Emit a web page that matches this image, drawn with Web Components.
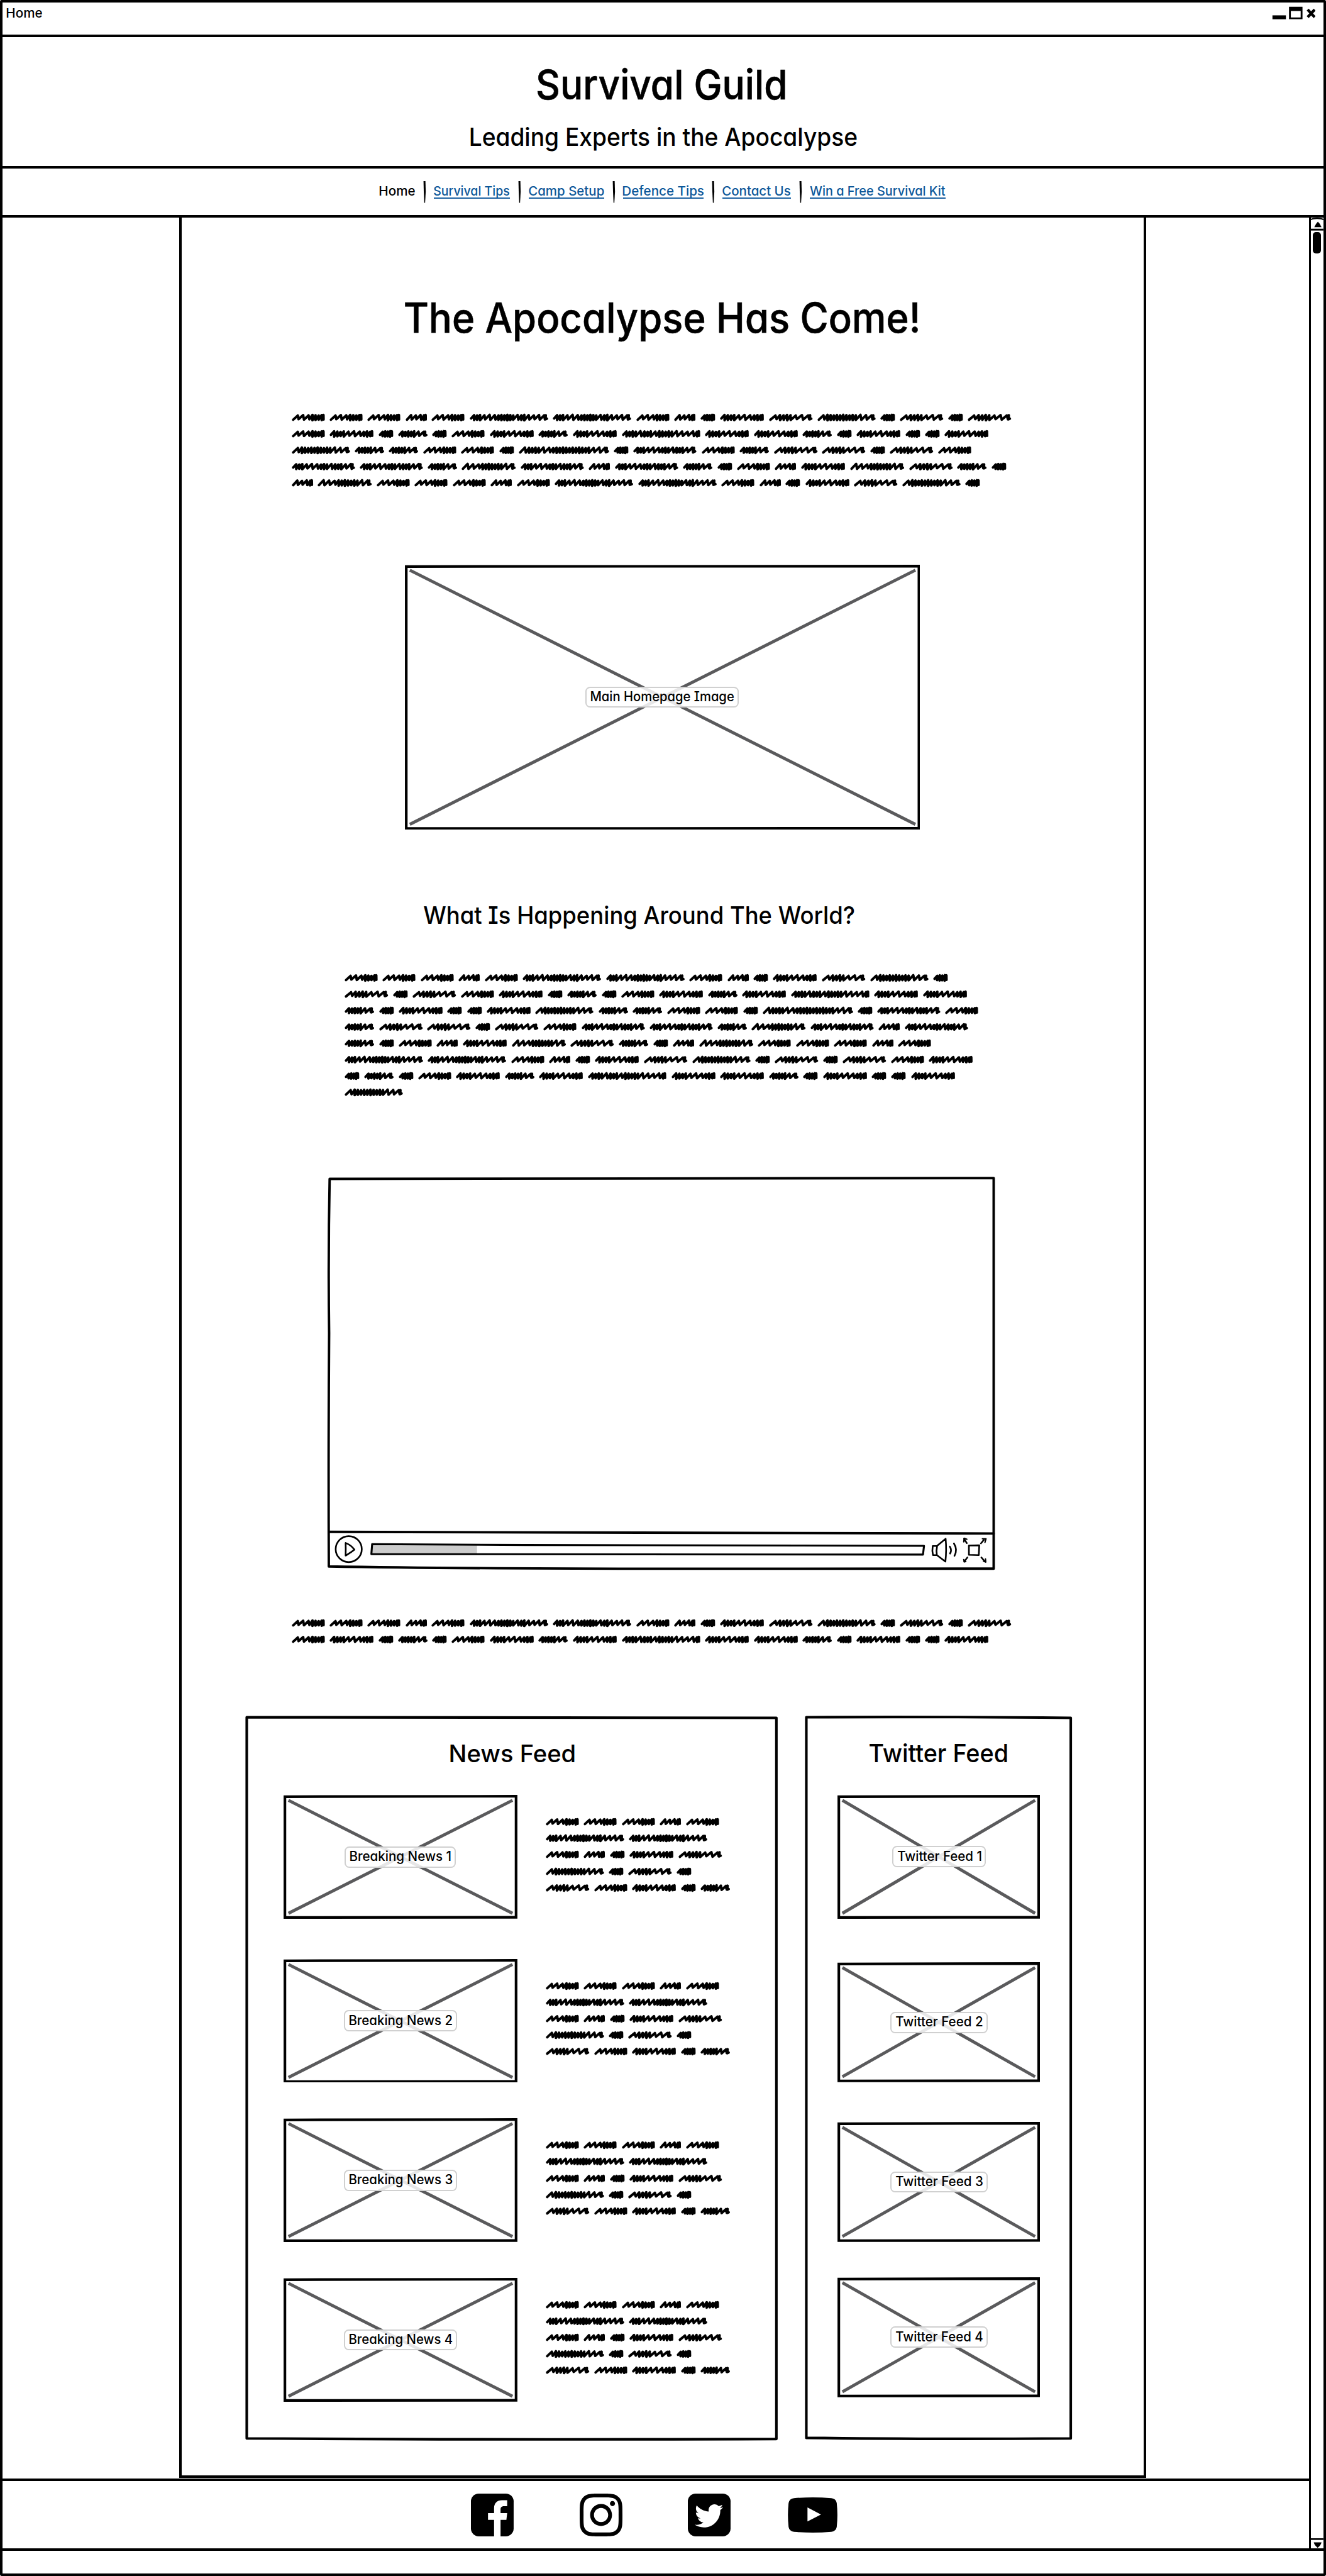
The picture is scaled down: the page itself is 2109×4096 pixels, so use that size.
<!DOCTYPE html>
<html lang="en">
<head>
<meta charset="utf-8">
<title>Home</title>
<style>
html,body{margin:0;background:#fff}
body{width:2109px;height:4096px;overflow:hidden;font-family:Inter,"Liberation Sans",sans-serif;font-weight:500;color:#000}
</style>
</head>
<body>
<guild-page></guild-page>
<script>
const define = (name, render, after) => customElements.define(name, class extends HTMLElement {
  connectedCallback() {
    if (this.shadowRoot) return;
    this.attachShadow({mode: 'open'}).innerHTML = render(this);
    if (after) after(this);
  }
});
const num = (el, n, d) => parseFloat(el.getAttribute(n) ?? d);

/* One line of lettering, given by its cap height and ink width. */
define('sk-text', el => {
  const w = num(el, 'w'), c = num(el, 'cap', 18.3);
  return `<style>
    :host{display:block;flex:none;width:${w}px;height:${c}px;line-height:${c}px;font-size:${c / .727}px;-webkit-text-stroke:${c > 50 ? .7 : 0}px currentColor}
    span{display:inline-block;white-space:nowrap;transform-origin:0 50%;font-feature-settings:"cv11","cv08"}
  </style><span><slot></slot></span>`;
}, el => {
  const w = num(el, 'w'), c = num(el, 'cap', 18.3), s = el.shadowRoot.querySelector('span');
  const adv = s.getBoundingClientRect().width / el.getBoundingClientRect().width * w;
  const ctx = document.createElement('canvas').getContext('2d');
  ctx.font = `500 ${c / .727}px Inter`;
  const m = ctx.measureText(el.textContent.trim());
  const lb = -m.actualBoundingBoxLeft, rb = m.width - m.actualBoundingBoxRight;
  const k = w / (adv - lb - rb);
  s.style.transform = `translateX(${-lb * k}px) scaleX(${k})`;
});

/* Scribbled placeholder words: o = open stroke, d = dense stroke. */
const WORDS = {
  a: [64.5, 'ooodddd'], b: [42, 'oood'], c: [152, 'dddoooddddddoddoooo'], d: [29, 'dddd'],
  e: [85.5, 'ddddoooddd'], f: [84.5, 'oddddooo'], g: [113, 'oddddddddddooo'], h: [57.5, 'dddddoo'],
  i: [122.5, 'dddooodddodddoo'], j: [105, 'ooodddddddoo'], k: [152, 'ddddodddodddddooood'], l: [175, 'oddddooddddddddddddooo']
};
const STREAM = 'aaabaccabdefgdfdfaedhdaehekeehdeddeghhaadldiahffdfaiihjibihdabejfhdbj';
const word = key => {
  const [w, pat] = WORDS[key], unit = {o: 1.75, d: 1};
  const total = [...pat].reduce((t, p) => t + unit[p], 0), k = (w - 9.5) / total;
  let x = 2.8, d = `M${x} ${pat[0] === 'o' ? 11.4 : 9}`;
  [...pat].forEach((p, i) => {
    const s = unit[p] * k, j = ((i * 7 + w) % 5) * .28;
    const hx = x + s * .62 + 2.4, nx = x + s, ly = (p === 'd' ? 12.6 : 11.6) - j;
    d += ` L${hx.toFixed(1)} ${(2 + j).toFixed(1)} L${nx.toFixed(1)} ${ly.toFixed(1)}`;
    x = nx;
  });
  d += pat.endsWith('d') ? ` L${w - 3.2} 2.2 L${w - 3} 11` : ` L${w - 5} 2.8 L${w - 5.5} 10.6 L${w - 2.8} 9.4`;
  return `<svg width="${w}" height="14.5" viewBox="0 0 ${w} 14.5"><path d="${d}"/></svg>`;
};
define('sk-scribble', el => {
  let out = '';
  for (let i = 0; i < num(el, 'count'); i++) out += word(STREAM[i % STREAM.length]);
  return `<style>
    :host{display:flex;flex:none;flex-wrap:wrap;align-content:flex-start;column-gap:8.8px;row-gap:17.2px}
    svg{display:block;flex:none;overflow:visible}
    path{fill:none;stroke:#000;stroke-width:4.8;stroke-linecap:round;stroke-linejoin:round}
  </style>${out}`;
});

/* Hand-ruled panel. */
define('sk-panel', el => {
  const w = num(el, 'w'), h = num(el, 'h');
  return `<style>
    :host{display:grid;flex:none;width:${w}px;height:${h}px}
    svg,div{grid-area:1/1}
    svg{display:block;overflow:visible}
    path{fill:none;stroke:#000;stroke-width:5;stroke-linejoin:round}
    div{display:flex;flex-direction:column;align-items:flex-start}
  </style>
  <svg width="${w}" height="${h}"><path d="M3 3 Q${w * .45} 1.6 ${w - 3} 4.2 Q${w - 1} ${h * .45} ${w - 3} ${h - 3} Q${w * .45} ${h - 1} 3 ${h - 4} Q1.4 ${h * .3} 3 3Z"/></svg>
  <div><slot></slot></div>`;
});

/* Crossed picture placeholder with a caption chip. */
define('sk-image', el => {
  const w = num(el, 'w'), h = num(el, 'h'), t = num(el, 'chip');
  return `<style>
    :host{display:grid;flex:none;width:${w}px;height:${h}px;place-items:center}
    svg,div{grid-area:1/1}
    svg{display:block}
    div{box-sizing:border-box;width:${t}px;height:41px;padding:8px 0 0 8.5px;border:2.5px solid #d0d0d0;border-radius:9px;background:rgba(255,255,255,.85)}
  </style>
  <svg width="${w}" height="${h}" fill="none">
    <path d="M2.6 3.4 L${w - 2.6} 2.6 V${h - 2.8} L2.6 ${h - 2.4}Z" stroke="#000" stroke-width="5.1"/>
    <path d="M9.5 10.5 L${w - 9.5} ${h - 10.5} M9.5 ${h - 10.5} L${w - 9.5} 10.5" stroke="#5a5a5c" stroke-width="6"/>
  </svg>
  <div><sk-text w="${t - 20.5}" cap="18.6">${el.getAttribute('caption')}</sk-text></div>`;
});

define('sk-player', () => `<style>
    :host{display:grid;width:1289px;height:758px}
    .frame,.ui{grid-area:1/1}
    svg{display:block;overflow:visible;fill:none;stroke:#000;stroke-linejoin:round;stroke-linecap:round}
    .ui{display:flex;flex-direction:column;justify-content:flex-end}
    .bar{display:flex;align-items:flex-start;height:67px;padding-left:14px}
  </style>
  <svg class="frame" width="1289" height="758" stroke-width="4.700">
    <path d="M4 3 Q600 .5 1286 1.400 Q1285.500 370 1286 755.300 L700 755.500 Q250 755.500 2.400 751 Q1.400 520 3 300 Q1 150 4 3Z"/>
    <path d="M3 684.300 Q500 685.500 1286 687.500"/>
  </svg>
  <div class="ui"><div class="bar">
    <svg width="54" height="54" stroke-width="3.200"><ellipse cx="27.500" cy="27" rx="25.200" ry="25"/><path d="M21.500 15 Q22 27 21.500 39.500 Q34 32 38.500 28 Q32 19 21.500 15Z"/></svg>
    <svg width="1072" height="54" style="margin-left:14.500px" stroke-width="3.800">
      <path d="M3 17 L206 19.500 V37 L2 36.500Z" fill="#ccc" stroke="none"/>
      <path d="M3.500 17.300 Q150 18.800 300 19 L1069 20.600 L1067 37.500 Q500 36.500 2 36.500Z"/></svg>
    <svg width="52" height="54" style="margin-left:11.500px" stroke-width="3.200"><path d="M3 21 H11 L28 7 Q30 30 27.500 51 L11 38.500 H3.500 Q1.500 30 3 21Z M11.500 21 Q9.500 30 11 38.500 M36 22 Q40.500 29 36.500 35.500 M44 16 Q51.500 28 45 40"/></svg>
    <svg width="46" height="54" style="margin-left:9px" stroke-width="3.200"><path d="M11 20 L31 19.500 L30 38.500 L11 38Z"/>
      <path d="M7 15.500 L1.500 7 M40 9 L34 16 M8 43 L2 51 M35 43 L42 51" stroke-width="3"/>
      <path d="M1 13 L2 6 L7 8 M37 7 L44 7 L42 14 M1 47 L2 51.500 L5 51 M43 46 L43.500 52 L39 50" stroke-width="2.600"/></svg>
  </div></div>`);

define('sk-nav', () => {
  const items = [['Home', 68], ['Survival Tips', 146], ['Camp Setup', 145.5], ['Defence Tips', 156], ['Contact Us', 131.5], ['Win a Free Survival Kit', 262]];
  const sep = '<svg width="36.6" height="42"><path d="M16.500 0 H20.200 L20.800 20 L19.600 42 H18 L17 20Z"/></svg>';
  return `<style>
    :host{display:flex;box-sizing:border-box;height:95px;border-bottom:4.900px solid #000;padding:24.500px 0 0 728.5px;align-items:flex-start}
    svg{display:block;flex:none}
    span{display:block;margin-top:9.600px}
    .link{color:#0c5799;padding-bottom:3.600px;border-bottom:2.500px solid #1d62a2}
  </style>` + items.map(([t, w], i) => `${i ? sep : ''}<span class="${i ? 'link' : ''}"><sk-text w="${w}" cap="18.3">${t}</sk-text></span>`).join('');
});

define('sk-titlebar', () => `<style>
    :host{display:flex;box-sizing:border-box;height:66.500px;border-bottom:5.500px solid #000;padding:10.400px 16px 0 8px;justify-content:space-between;align-items:flex-start}
    svg{display:block;margin-top:-3px}
  </style>
  <sk-text w="68" cap="18.3">Home</sk-text>
  <svg width="84" height="26"><path d="M1 17.500 H27 V25 H1Z"/><path fill-rule="evenodd" d="M33 1 H59 V25 H33Z M36.500 9 V21.500 H55.500 V9Z"/><path d="M69 6.500 L82.500 21 M82.500 6.500 L69 21" stroke="#000" stroke-width="5.400"/></svg>`);

define('sk-scrollbar', () => `<style>
    :host{display:flex;flex-direction:column;box-sizing:border-box;width:28px;border-left:3.700px solid #000}
    svg{display:block;flex:none;overflow:visible}
    .track{flex:1}
    .thumb{width:16px;height:42px;margin:2px 0 0 4px;border-radius:6px;background:#000}
  </style>
  <svg width="24" height="25"><path d="M0 4 Q3 1.500 12 1.500 T24 4" fill="none" stroke="#000" stroke-width="2.600"/><path d="M6.500 18.500 Q10 11 13.500 8 Q18 12 20.500 18.500Z"/><path d="M0 21.500 H24 V25 H0Z"/></svg>
  <div class="track"><div class="thumb"></div></div>
  <svg width="24" height="19"><path d="M0 0 H24 V3.200 H0Z"/><path d="M5.500 8 H20.500 Q19 14 13 18.500 Q7 14 5.500 8Z"/></svg>`);

define('sk-social', () => `<style>
    :host{display:flex;align-items:center;box-sizing:border-box;height:135px;padding:1px 0 0 904px;border-top:5px solid #000}
    svg{display:block;flex:none}
  </style>
  <svg width="82.500" height="82.500" viewBox="0 0 82.500 82.500"><rect width="82.500" height="82.500" rx="15"/><path fill="#fff" d="M44.700 82.500V50.700H33V37.700H44.700V28C44.700 18 51 12.700 60 12.700H70V24.300H64C58.500 24.300 57.200 27 57.200 31V37.700H70L68.500 50.700H57.200V82.500Z"/></svg>
  <svg style="margin-left:128.300px" width="82.500" height="82.500" viewBox="0 32 448 448"><path d="M224.100 141c-63.600 0-114.900 51.300-114.900 114.900s51.300 114.900 114.900 114.900S339 319.500 339 255.900 287.700 141 224.100 141zm0 189.600c-41.100 0-74.700-33.500-74.700-74.700s33.500-74.700 74.700-74.700 74.700 33.500 74.700 74.700-33.600 74.700-74.700 74.700zm146.400-194.300c0 14.900-12 26.800-26.800 26.800-14.900 0-26.800-12-26.800-26.800s12-26.800 26.800-26.800 26.800 12 26.800 26.800zm76.100 27.200c-1.700-35.900-9.900-67.700-36.200-93.900-26.200-26.200-58-34.400-93.900-36.200-37-2.100-147.900-2.100-184.900 0-35.800 1.700-67.600 9.900-93.900 36.100s-34.400 58-36.200 93.900c-2.100 37-2.100 147.900 0 184.900 1.700 35.900 9.900 67.700 36.200 93.900s58 34.400 93.900 36.200c37 2.100 147.900 2.100 184.900 0 35.900-1.700 67.700-9.900 93.900-36.200 26.200-26.200 34.400-58 36.200-93.900 2.100-37 2.100-147.800 0-184.800zM398.800 388c-7.800 19.600-22.900 34.700-42.600 42.600-29.500 11.700-99.500 9-132.100 9s-102.700 2.600-132.100-9c-19.600-7.800-34.700-22.900-42.600-42.600-11.700-29.500-9-99.500-9-132.100s-2.600-102.700 9-132.100c7.800-19.600 22.900-34.700 42.600-42.600 29.500-11.700 99.500-9 132.100-9s102.700-2.600 132.100 9c19.600 7.800 34.700 22.900 42.600 42.600 11.700 29.500 9 99.500 9 132.100s2.700 102.700-9 132.100z"/></svg>
  <svg style="margin-left:125.500px" width="82.500" height="82.500" viewBox="0 0 82.500 82.500"><rect width="82.500" height="82.500" rx="15"/><path fill="#fff" transform="translate(2.400 -.9) scale(.1715)" d="M351.100 190.800c.2 2.800.2 5.700.2 8.500 0 86.700-66 186.600-186.600 186.600-37.200 0-71.700-10.800-100.700-29.400 5.300.6 10.400.8 15.800.8 30.700 0 58.900-10.400 81.400-28-28.800-.6-53-19.500-61.300-45.500 10.100 1.500 19.200 1.500 29.600-1.200-30-6.100-52.500-32.500-52.500-64.400v-.8c8.700 4.900 18.900 7.900 29.600 8.300a65.447 65.447 0 0 1-29.200-54.600c0-12.200 3.200-23.400 8.900-33.100 32.300 39.800 80.800 65.800 135.200 68.600-9.300-44.500 24-80.600 64-80.600 18.900 0 35.900 7.900 47.900 20.700 14.800-2.800 29-8.300 41.600-15.800-4.900 15.200-15.200 28-28.800 36.100 13.200-1.400 26-5.100 37.800-10.200-8.900 13.100-20.100 24.700-32.900 34z"/></svg>
  <svg style="margin-left:111.300px" width="96" height="68" viewBox="0 0 96 68"><path fill-rule="evenodd" d="M12 1.500 Q48 -1.400 84 1.500 Q93 2.500 94.500 11 Q97 34 94.500 57 Q93 65.500 84 66.500 Q48 69.400 12 66.500 Q3 65.500 1.500 57 Q-1 34 1.500 11 Q3 2.500 12 1.500Z M38 19.300 V46.500 L64 33Z"/></svg>`);

const newsRow = (n, mt, chip) => `<div class="row" style="margin-top:${mt}px"><sk-image w="451.500" h="239" chip="${chip}" caption="Breaking News ${n}"></sk-image><sk-scribble class="brief" count="21"></sk-scribble></div>`;
const tweet = (n, mt, h, chip) => `<sk-image style="margin:${mt}px 0 0 64px" w="391" h="${h}" chip="${chip}" caption="Twitter Feed ${n}"></sk-image>`;

define('guild-page', () => `<style>
    :host{display:flex;flex-direction:column;box-sizing:border-box;zoom:.82383;width:2560px;height:4972px;background:#fff;border:5.400px solid #000;border-top-width:5px;border-radius:3px}
    header{display:flex;flex-direction:column;box-sizing:border-box;height:254px;border-bottom:5.200px solid #000;padding-top:63.500px}
    .body{display:flex;box-sizing:border-box;height:4503px;border-bottom:5px solid #000}
    .left{display:flex;flex-direction:column;flex:1}
    main{display:flex;flex-direction:column;align-items:flex-start;box-sizing:border-box;width:1866px;height:4362.500px;margin:0 0 1px 341.500px;border:solid #000;border-width:0 4.900px 5px}
    .feeds{display:flex;gap:51px;margin:139.500px 0 0 122.500px}
    .row{display:flex;align-items:flex-start;padding-left:73.500px}
    .brief{width:362px;margin:45px 0 0 55px}
  </style>
  <sk-titlebar></sk-titlebar>
  <header>
    <sk-text style="margin-left:1033.500px" w="478" cap="57.500">Survival Guild</sk-text>
    <sk-text style="margin:54.800px 0 0 903px" w="746" cap="34.500">Leading Experts in the Apocalypse</sk-text>
  </header>
  <sk-nav></sk-nav>
  <div class="body">
    <div class="left">
      <main>
        <sk-text style="margin:164.500px 0 0 430.500px" w="990" cap="58">The Apocalypse Has Come!</sk-text>
        <sk-scribble style="margin:155.300px 0 0 211.500px;width:1395px;height:141.700px" count="83"></sk-scribble>
        <sk-image style="margin:150px 0 0 430px" w="995" h="511.500" chip="296" caption="Main Homepage Image"></sk-image>
        <sk-text style="margin:147.800px 0 0 467px" w="831" cap="34.300">What Is Happening Around The World?</sk-text>
        <sk-scribble style="margin:96.500px 0 0 314px;width:1231px;height:236px" count="105"></sk-scribble>
        <sk-player style="margin:156px 0 0 281px"></sk-player>
        <sk-scribble style="margin:96px 0 0 211.500px;width:1395px;height:46.500px" count="35"></sk-scribble>
        <div class="feeds">
          <sk-panel w="1028.500" h="1399">
            <sk-text style="margin:55.600px 0 0 395px" w="240" cap="34.200">News Feed</sk-text>
            ${newsRow(1, 63, 214.5)}${newsRow(2, 77, 219)}${newsRow(3, 69, 219)}${newsRow(4, 69, 219)}
          </sk-panel>
          <sk-panel w="516.500" h="1398">
            <sk-text style="margin:55.300px 0 0 126px" w="265" cap="34.500">Twitter Feed</sk-text>
            ${tweet(1, 62.5, 239, 181.5)}${tweet(2, 84.5, 231.5, 188)}${tweet(3, 76.5, 231.5, 188)}${tweet(4, 68.3, 231.5, 188)}
          </sk-panel>
        </div>
      </main>
      <sk-social></sk-social>
    </div>
    <sk-scrollbar></sk-scrollbar>
  </div>`);
</script>
</body>
</html>
